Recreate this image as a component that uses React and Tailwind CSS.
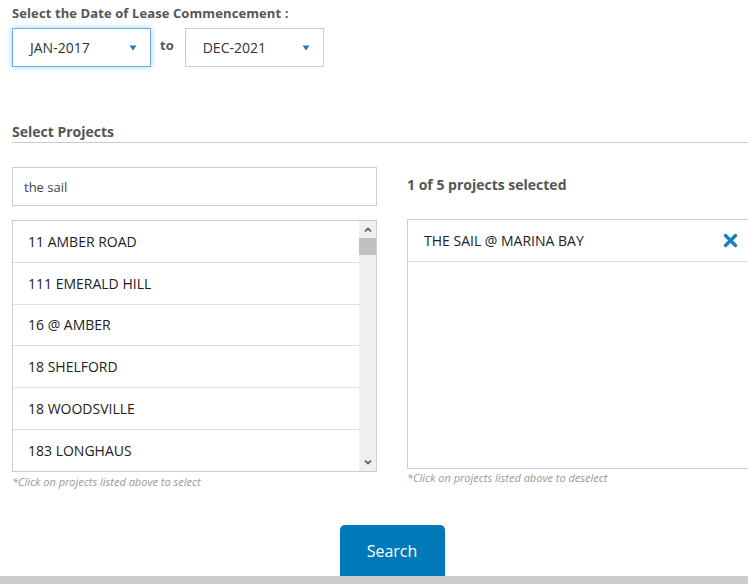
import React, { useState } from 'react'

const PROJECTS = [
  '11 AMBER ROAD',
  '111 EMERALD HILL',
  '16 @ AMBER',
  '18 SHELFORD',
  '18 WOODSVILLE',
  '183 LONGHAUS',
]

function Caret() {
  return (
    <svg width="8" height="6" viewBox="0 0 8 6">
      <path d="M0.5 0.5 L7.5 0.5 L4 5.5 Z" fill="#1a7fc1" />
    </svg>
  )
}

function DateSelect({ value, focused }) {
  return (
    <div
      className={`w-[139px] h-[39px] flex items-center justify-between pl-[17px] pr-[13px] bg-white text-[14px] text-[#333] border ${
        focused ? 'border-[#66afe9] shadow-[0_0_6px_rgba(102,175,233,0.6)]' : 'border-[#ccc]'
      }`}
    >
      <span>{value}</span>
      <Caret />
    </div>
  )
}

export default function App() {
  const [search, setSearch] = useState('the sail')
  const [selected] = useState(['THE SAIL @ MARINA BAY'])

  return (
    <div className="w-[748px] h-[584px] overflow-hidden bg-white flex flex-col" style={{ fontFamily: '"Open Sans", "Liberation Sans", sans-serif' }}>
      <div className="w-[772px] shrink-0 pl-[12px] flex-1 flex flex-col">
        {/* Lease date range */}
        <div className="pt-[4px] text-[13px] leading-[18px] font-bold text-[#555] tracking-[0.1px]">
          Select the Date of Lease Commencement :
        </div>
        <div className="mt-[6px] flex items-center gap-[9px]">
          <DateSelect value="JAN-2017" focused />
          <span className="text-[13px] font-bold text-[#555] mr-[2px] -mt-[4px]">to</span>
          <DateSelect value="DEC-2021" />
        </div>

        {/* Projects */}
        <div className="mt-[56px] text-[14px] leading-[18px] font-bold text-[#555] pb-[1px] border-b border-[#ccc]">
          Select Projects
        </div>

        <div className="mt-[24px] flex gap-[30px]">
          {/* left column */}
          <div className="w-[365px] shrink-0 flex flex-col">
            <input
              value={search}
              onChange={e => setSearch(e.target.value)}
              className="h-[39px] border border-[#ccc] px-[11px] text-[13px] text-[#444] outline-none"
            />
            <div className="mt-[14px] h-[252px] border border-[#ccc] flex">
              <div className="flex-1 overflow-hidden">
                {PROJECTS.map(p => (
                  <div key={p} className="h-[41.8px] shrink-0 flex items-center pl-[15px] text-[14px] text-[#222] border-b border-[#ddd]">
                    {p}
                  </div>
                ))}
              </div>
              <div className="w-[17px] bg-[#f0f0f0] flex flex-col">
                <div className="h-[17px] flex items-center justify-center">
                  <svg width="8" height="5" viewBox="0 0 8 5"><path d="M1 4.5 L4 1.5 L7 4.5" stroke="#555" strokeWidth="1.6" fill="none" /></svg>
                </div>
                <div className="h-[17px] bg-[#c1c1c1]" />
                <div className="flex-1" />
                <div className="h-[17px] flex items-center justify-center">
                  <svg width="8" height="5" viewBox="0 0 8 5"><path d="M1 0.5 L4 3.5 L7 0.5" stroke="#555" strokeWidth="1.6" fill="none" /></svg>
                </div>
              </div>
            </div>
            <div className="mt-[2px] text-[11px] italic text-[#999]">*Click on projects listed above to select</div>
          </div>

          {/* right column */}
          <div className="w-[365px] shrink-0 flex flex-col">
            <div className="h-[35px] flex items-center text-[14px] font-bold text-[#555]">
              {selected.length} of 5 projects selected
            </div>
            <div className="mt-[17px] h-[250px] border border-[#ccc]">
              {selected.map(p => (
                <div key={p} className="h-[42px] flex items-center justify-between pl-[16px] pr-[33px] text-[14px] text-[#222] border-b border-[#ddd]">
                  <span>{p}</span>
                  <svg width="15" height="15" viewBox="0 0 15 15">
                    <path d="M2.5 2.5 L12.5 12.5 M12.5 2.5 L2.5 12.5" stroke="#1a7fc1" strokeWidth="3.4" strokeLinecap="round" />
                  </svg>
                </div>
              ))}
            </div>
            <div className="mt-[1px] text-[11px] italic text-[#999]">*Click on projects listed above to deselect</div>
          </div>
        </div>

        <div className="mt-auto flex justify-center">
          <button className="w-[105px] h-[51px] bg-[#0079b9] text-white text-[16px] rounded-t-[5px]">Search</button>
        </div>
      </div>
      <div className="h-[8px] bg-[#ccc]" />
    </div>
  )
}
